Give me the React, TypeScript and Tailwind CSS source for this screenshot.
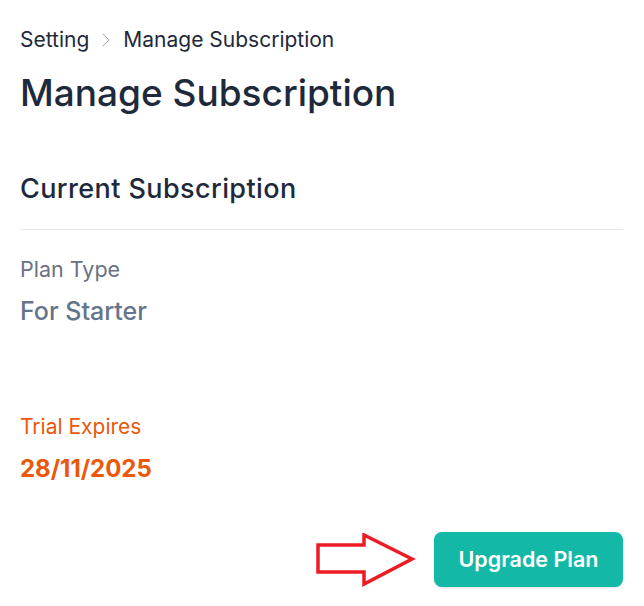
import React from 'react';
import { ChevronRight } from 'lucide-react';

const ArrowHint = () => (
  <svg width="100" height="54" viewBox="0 0 100 54" className="shrink-0">
    <polygon
      points="2,12 48,12 48,2 96,26 48,51 48,39 2,39"
      fill="none"
      stroke="#ed1c24"
      strokeWidth="3.5"
      strokeLinejoin="miter"
    />
  </svg>
);

export default function App() {
  return (
    <div className="min-h-screen bg-white pl-[20px] pr-[21px] pt-[26px] font-['Inter',sans-serif]">
      <nav className="flex items-center gap-[5px] text-[21px] leading-[28px] text-[#1e293b]">
        <span>Setting</span>
        <ChevronRight size={24} strokeWidth={1} className="text-gray-400" />
        <span>Manage Subscription</span>
      </nav>

      <h1 className="mt-[19px] text-[37px] leading-[40px] font-medium text-[#1e293b]">
        Manage Subscription
      </h1>

      <h2 className="mt-[60px] text-[27px] leading-[32px] font-medium tracking-[0.4px] text-[#1e293b]">
        Current Subscription
      </h2>
      <div className="mt-[24px] border-t border-gray-200" />

      <div className="mt-[25px]">
        <p className="text-[21.5px] leading-[28px] text-gray-500">Plan Type</p>
        <p className="mt-[12px] text-[25px] leading-[32px] font-medium text-[#64748b]">For Starter</p>
      </div>

      <div className="mt-[86px]">
        <p className="text-[21px] leading-[28px] text-[#ea580c]">Trial Expires</p>
        <p className="mt-[12px] text-[24px] leading-[32px] font-bold text-[#ea580c]">28/11/2025</p>
      </div>

      <div className="mt-[47px] flex items-center justify-end gap-[18px]">
        <ArrowHint />
        <button className="h-[55px] w-[189px] rounded-lg bg-[#14b8a6] text-[21.5px] font-semibold text-white shadow-sm">
          Upgrade Plan
        </button>
      </div>
    </div>
  );
}
